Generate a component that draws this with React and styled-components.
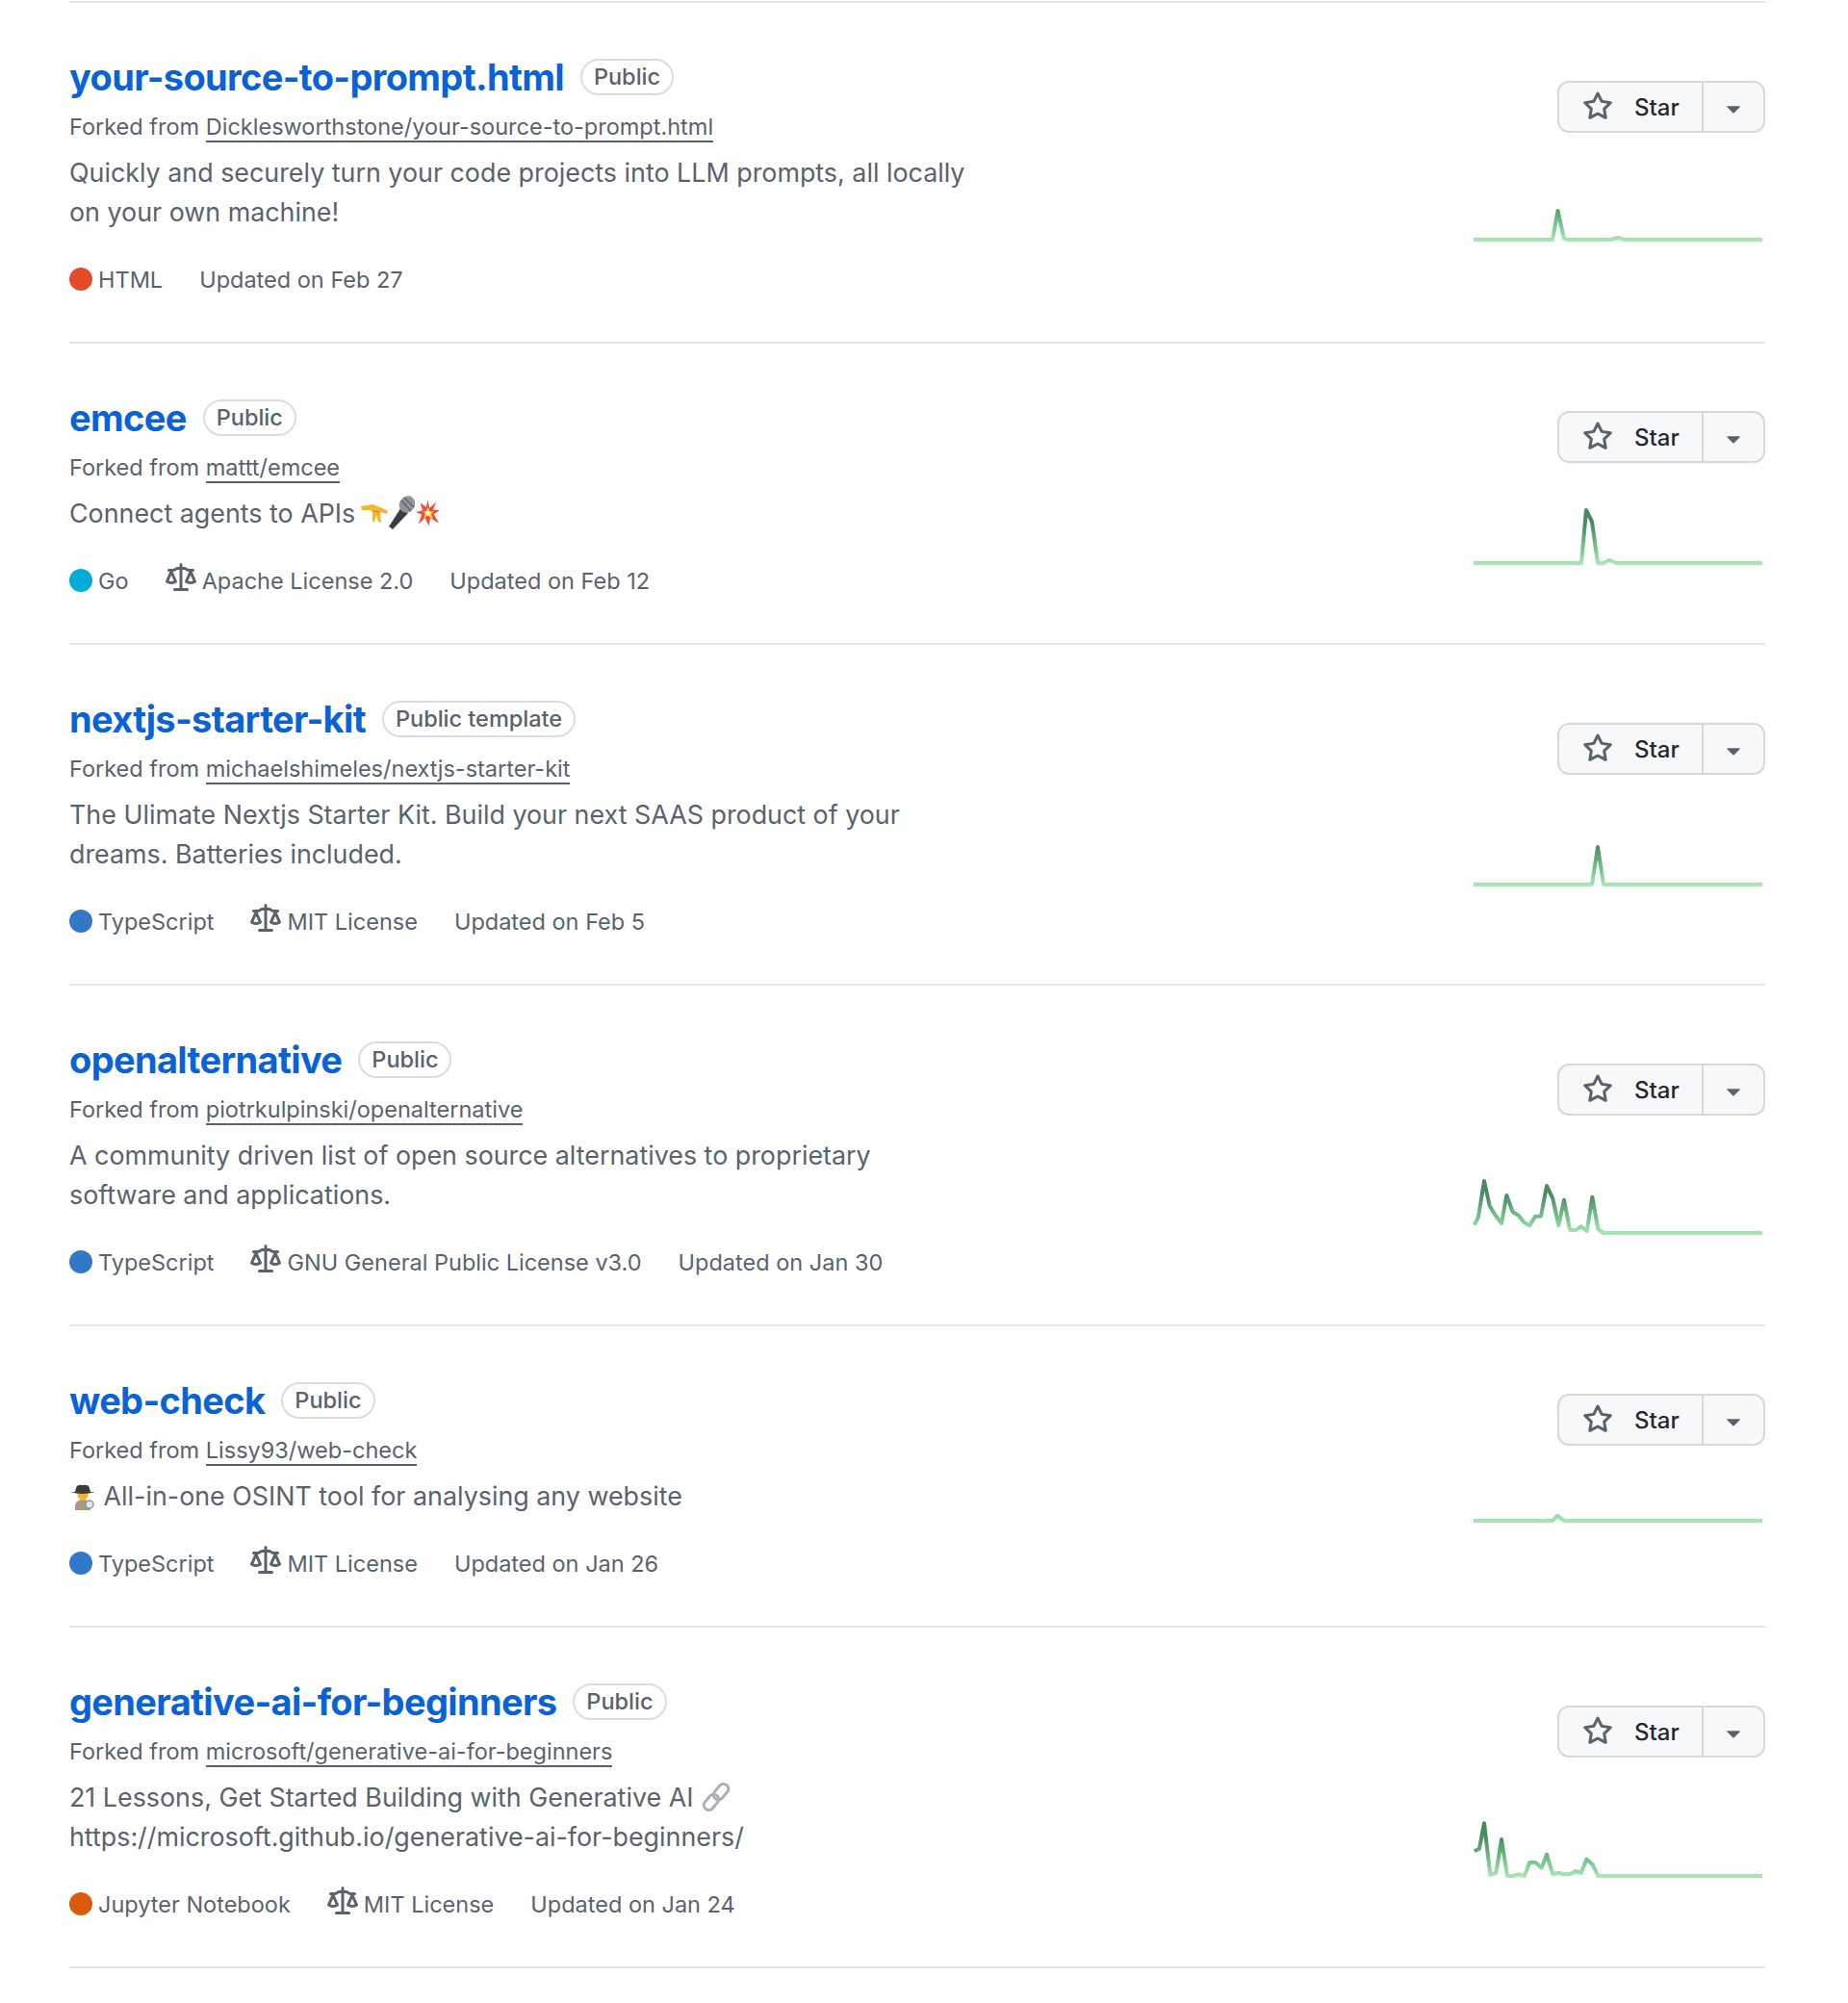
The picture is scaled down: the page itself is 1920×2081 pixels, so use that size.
import React from "react";
import styled, { createGlobalStyle } from "styled-components";
import { GoTriangleDown } from "react-icons/go";

const GlobalStyle = createGlobalStyle`
  html, body {
    margin: 0;
    padding: 0;
    background: #ffffff;
  }
  body {
    font-family: Inter, "Liberation Sans", sans-serif;
    color: #59636e;
  }
`;

const Page = styled.div`
  width: 1920px;
  height: 2081px;
  box-sizing: border-box;
  padding: 1px 86px 0 72px;
`;

const Row = styled.div`
  display: flex;
  justify-content: space-between;
  height: ${(p) => (p.$tall ? 354 : 313)}px;
  box-sizing: border-box;
  border-top: 2px solid #e3e6ea;
  &:last-child {
    height: 356px;
    border-bottom: 2px solid #e3e6ea;
  }
`;

const Info = styled.div`
  padding-top: 54px;
  width: 980px;
`;

const TitleLine = styled.div`
  display: flex;
  align-items: center;
  gap: 17px;
  height: 46px;
`;

const RepoName = styled.a`
  font-size: 38px;
  line-height: 46px;
  font-weight: 700;
  letter-spacing: -0.65px;
  color: #0a63d6;
`;

const Label = styled.span`
  font-size: 23.5px;
  font-weight: 500;
  line-height: 34px;
  padding: 0 12px;
  border: 2px solid #d9dde2;
  border-radius: 20px;
`;

const Fork = styled.p`
  margin: 13px 0 0;
  font-size: 23.5px;
  line-height: 32px;
`;

const ForkLink = styled.a`
  border-bottom: 2px solid #59636e;
`;

const Desc = styled.p`
  margin: 11px 0 0;
  font-size: 26.85px;
  line-height: 41px;
`;

const Meta = styled.div`
  display: flex;
  align-items: center;
  gap: 38px;
  margin-top: 33px;
  font-size: 23.5px;
  line-height: 34px;
`;

const MetaItem = styled.span`
  display: flex;
  align-items: center;
  gap: 6px;
`;

const Dot = styled.span`
  width: 24px;
  height: 24px;
  margin-top: -2px;
  border-radius: 50%;
  background: ${(p) => p.$color};
`;

const Octicon = styled.svg`
  width: ${(p) => p.$size}px;
  height: ${(p) => p.$size}px;
  fill: #59636e;
  flex: none;
`;

const LawIcon = styled(Octicon)`
  margin-top: -6px;
`;

const Side = styled.div`
  display: flex;
  flex-direction: column;
  align-items: flex-end;
  padding-top: ${(p) => (p.$tall ? 81 : 70)}px;
`;

const StarGroup = styled.div`
  display: flex;
  height: 54px;
  width: 216px;
  box-sizing: border-box;
  background: #f6f8fa;
  border: 2px solid #d5d9de;
  border-radius: 12px;
`;

const StarButton = styled.button`
  display: flex;
  align-items: center;
  gap: 22px;
  width: 150px;
  padding: 0 0 0 24px;
  background: none;
  border: 0;
  border-right: 2px solid #d5d9de;
  font: 500 24px Inter, "Liberation Sans", sans-serif;
  color: #25292e;
`;

const CaretButton = styled.button`
  flex: 1;
  display: flex;
  align-items: center;
  justify-content: center;
  padding: 6px 0 0;
  background: none;
  border: 0;
  color: #59636e;
`;

const Spark = styled.svg`
  display: block;
  width: 304px;
  height: 130px;
  margin: 4px 0 0 0;
  overflow: visible;
`;

const Emoji = styled.svg`
  display: inline-block;
  width: ${(p) => p.$w}px;
  height: ${(p) => p.$h}px;
  vertical-align: ${(p) => p.$drop || -5}px;
  margin-left: ${(p) => p.$ml || 0}px;
`;

const StarGlyph = () => (
  <Octicon viewBox="0 0 16 16" $size={32}>
    <path d="M8 .25a.75.75 0 0 1 .673.418l1.882 3.815 4.21.612a.75.75 0 0 1 .416 1.279l-3.046 2.97.719 4.192a.751.751 0 0 1-1.088.791L8 12.347l-3.766 1.98a.75.75 0 0 1-1.088-.79l.72-4.194L.818 6.374a.75.75 0 0 1 .416-1.28l4.21-.611L7.327.668A.75.75 0 0 1 8 .25Zm0 2.445L6.615 5.5a.75.75 0 0 1-.564.41l-3.097.45 2.24 2.184a.75.75 0 0 1 .216.664l-.528 3.084 2.769-1.456a.75.75 0 0 1 .698 0l2.77 1.456-.53-3.084a.75.75 0 0 1 .216-.664l2.24-2.183-3.096-.45a.75.75 0 0 1-.564-.41L8 2.694Z" />
  </Octicon>
);

const LawGlyph = () => (
  <LawIcon viewBox="0 0 16 16" $size={32}>
    <path d="M8.75.75V2h.985c.304 0 .603.08.867.231l1.29.736c.038.022.08.033.124.033h2.234a.75.75 0 0 1 0 1.5h-.427l2.111 4.692a.75.75 0 0 1-.154.838l-.53-.53.529.531-.001.002-.002.002-.006.006-.006.005-.01.01-.045.04c-.21.176-.441.327-.686.45C14.556 10.78 13.88 11 13 11a4.498 4.498 0 0 1-2.023-.454 3.544 3.544 0 0 1-.686-.45l-.045-.04-.016-.015-.006-.006-.004-.004v-.001a.75.75 0 0 1-.154-.838L12.178 4.5h-.162c-.305 0-.604-.079-.868-.231l-1.29-.736a.245.245 0 0 0-.124-.033H8.75V13h2.5a.75.75 0 0 1 0 1.5h-6.5a.75.75 0 0 1 0-1.5h2.5V3.5h-.984a.245.245 0 0 0-.124.033l-1.289.737c-.265.15-.564.23-.869.23h-.162l2.112 4.692a.75.75 0 0 1-.154.838l-.53-.53.529.531-.001.002-.002.002-.006.006-.016.015-.045.04c-.21.176-.441.327-.686.45C4.556 10.78 3.88 11 3 11a4.498 4.498 0 0 1-2.023-.454 3.544 3.544 0 0 1-.686-.45l-.045-.04-.016-.015-.006-.006-.004-.004v-.001a.75.75 0 0 1-.154-.838L2.178 4.5H1.75a.75.75 0 0 1 0-1.5h2.234a.249.249 0 0 0 .125-.033l1.288-.737c.265-.15.564-.23.869-.23h.984V.75a.75.75 0 0 1 1.5 0Zm2.945 8.477c.285.135.718.273 1.305.273s1.02-.138 1.305-.273L13 6.327Zm-10 0c.285.135.718.273 1.305.273s1.02-.138 1.305-.273L3 6.327Z" />
  </LawIcon>
);

// sparkline traced from the reference: [x, height above the baseline]
const Sparkline = ({ id, base, points }) => {
  const d = points
    .map(([x, h], i) => `${i ? "L" : "M"}${x} ${(base - h).toFixed(1)}`)
    .join(" ");
  return (
    <Spark viewBox="0 0 304 130">
      <defs>
        <linearGradient
          id={id}
          gradientUnits="userSpaceOnUse"
          x1="0"
          y1={base}
          x2="0"
          y2={base - 40}
        >
          <stop offset="0%" stopColor="#a5e6b3" />
          <stop offset="40%" stopColor="#74c48c" />
          <stop offset="100%" stopColor="#4c8a62" />
        </linearGradient>
      </defs>
      <path d={d} fill="none" stroke={`url(#${id})`} strokeWidth="4" strokeLinejoin="round" />
    </Spark>
  );
};

// turns points read off a 3x crop into sparkline points
const fromCrop = (list, baseY) =>
  list.map(([x, y]) => [+(x / 3 - 19).toFixed(1), (baseY - y) / 3]);

const PinchEmoji = () => (
  <Emoji viewBox="0 0 28 22" $w={28} $h={22} $ml={6} $drop={-2}>
    <path d="M0 3 L12 1 L20 4 L28 8 L27 11 L20 9 L21 20 L18 19 L16 12 L14 20 L12 18 L12 8 L7 7 L1 7 Z" fill="#f3b62f" />
    <path d="M12 8 L20 9" stroke="#c98a1a" strokeWidth="1" />
  </Emoji>
);

const MicEmoji = () => (
  <Emoji viewBox="0 0 28 35" $w={28} $h={35} $drop={-7}>
    <path d="M1 32 L14 12 L21 18 L5 35 Z" fill="#3a3e42" />
    <ellipse cx="20" cy="9" rx="8" ry="9" transform="rotate(35 20 9)" fill="#8e9499" />
    <path d="M14 5 L24 16 M17 2 L27 12" stroke="#5c6166" strokeWidth="1.2" />
  </Emoji>
);

const BoomEmoji = () => (
  <Emoji viewBox="0 0 28 32" $w={25} $h={32} $drop={-6} $ml={1}>
    <path d="M14 1 L16 10 L24 3 L20 12 L28 13 L21 17 L27 28 L17 22 L15 31 L11 22 L3 29 L7 18 L0 15 L8 13 L5 4 L12 9 Z" fill="#ee4d3c" />
    <path d="M14 9 L16 14 L21 14 L18 17 L20 23 L14 19 L9 23 L11 17 L8 14 L12 14 Z" fill="#fbd24b" />
    <circle cx="14" cy="16" r="2.6" fill="#fff6d8" />
  </Emoji>
);

const SleuthEmoji = () => (
  <Emoji viewBox="0 0 28 28" $w={28} $h={28}>
    <path d="M6 25 Q6 17 14 17 Q22 17 22 25 L22 28 L6 28 Z" fill="#a79a80" />
    <circle cx="14" cy="12" r="5.5" fill="#f7b32f" />
    <path d="M7 5 Q8 1 14 2 Q20 1 21 5 L22 9 L27 9 Q14 13 1 9 L6 9 Z" fill="#3c3c3a" />
    <circle cx="21" cy="22" r="4" fill="#dfeaf0" stroke="#8a979e" strokeWidth="1.5" />
  </Emoji>
);

const LinkEmoji = () => (
  <Emoji viewBox="0 0 28 28" $w={32} $h={32} $drop={-6}>
    <g fill="none" stroke="#a9b0b6" strokeWidth="2.6">
      <rect x="14" y="1" width="9" height="16" rx="4.5" transform="rotate(40 18 9)" />
      <rect x="5" y="11" width="9" height="16" rx="4.5" transform="rotate(40 10 19)" />
    </g>
  </Emoji>
);

const repos = [
  {
    name: "your-source-to-prompt.html",
    label: "Public",
    fork: "Dicklesworthstone/your-source-to-prompt.html",
    desc: (
      <>
        Quickly and securely turn your code projects into LLM prompts, all locally
        <br />
        on your own machine!
      </>
    ),
    tall: true,
    lang: "HTML",
    color: "#e34c26",
    updated: "Feb 27",
    base: 107,
    points: [[1, 0], [83, 0], [88.5, 30], [95, 1], [99, 0], [144, 0], [151, 2], [158, 0], [301, 0]],
  },
  {
    name: "emcee",
    label: "Public",
    fork: "mattt/emcee",
    desc: (
      <>
        Connect agents to APIs
        <PinchEmoji />
        <MicEmoji />
        <BoomEmoji />
      </>
    ),
    lang: "Go",
    color: "#00add8",
    license: "Apache License 2.0",
    updated: "Feb 12",
    base: 100,
    points: [[1, 0], [113, 0], [118, 55], [124, 43], [130, 0], [136, 0], [142, 3], [149, 0], [301, 0]],
  },
  {
    name: "nextjs-starter-kit",
    label: "Public template",
    fork: "michaelshimeles/nextjs-starter-kit",
    desc: (
      <>
        The Ulimate Nextjs Starter Kit. Build your next SAAS product of your
        <br />
        dreams. Batteries included.
      </>
    ),
    tall: true,
    lang: "TypeScript",
    color: "#3178c6",
    license: "MIT License",
    updated: "Feb 5",
    base: 110,
    points: [[1, 0], [124, 0], [130, 39], [136, 0], [301, 0]],
  },
  {
    name: "openalternative",
    label: "Public",
    fork: "piotrkulpinski/openalternative",
    desc: (
      <>
        A community driven list of open source alternatives to proprietary
        <br />
        software and applications.
      </>
    ),
    tall: true,
    lang: "TypeScript",
    color: "#3178c6",
    license: "GNU General Public License v3.0",
    updated: "Jan 30",
    base: 118,
    points: fromCrop(
      [[62, 220], [75, 195], [93, 83], [110, 160], [128, 190], [147, 215], [163, 128], [182, 180], [200, 190], [218, 213], [235, 222], [252, 193], [270, 193], [288, 98], [307, 138], [325, 222], [342, 142], [360, 235], [377, 237], [395, 225], [413, 240], [430, 133], [448, 233], [465, 245], [960, 245]],
      245
    ),
  },
  {
    name: "web-check",
    label: "Public",
    fork: "Lissy93/web-check",
    desc: (
      <>
        <SleuthEmoji /> All-in-one OSINT tool for analysing any website
      </>
    ),
    lang: "TypeScript",
    color: "#3178c6",
    license: "MIT License",
    updated: "Jan 26",
    base: 74,
    points: [[1, 0], [83, 0], [88, 5], [95, 0], [301, 0]],
  },
  {
    name: "generative-ai-for-beginners",
    label: "Public",
    fork: "microsoft/generative-ai-for-beginners",
    desc: (
      <>
        21 Lessons, Get Started Building with Generative AI <LinkEmoji />
        <br />
        https://microsoft.github.io/generative-ai-for-beginners/
      </>
    ),
    tall: true,
    lang: "Jupyter Notebook",
    color: "#da5b0b",
    license: "MIT License",
    updated: "Jan 24",
    base: 119,
    points: fromCrop(
      [[62, 160], [78, 152], [93, 73], [112, 233], [130, 228], [147, 123], [165, 237], [183, 237], [200, 232], [218, 237], [235, 195], [253, 195], [272, 212], [288, 170], [307, 232], [325, 228], [343, 232], [360, 232], [377, 222], [395, 228], [412, 185], [430, 200], [448, 237], [960, 237]],
      237
    ),
  },
];

const App = () => (
  <Page>
    <GlobalStyle />
    {repos.map((repo, i) => (
      <Row key={repo.name} $tall={repo.tall}>
        <Info>
          <TitleLine>
            <RepoName>{repo.name}</RepoName>
            <Label>{repo.label}</Label>
          </TitleLine>
          <Fork>
            Forked from <ForkLink>{repo.fork}</ForkLink>
          </Fork>
          <Desc>{repo.desc}</Desc>
          <Meta>
            <MetaItem>
              <Dot $color={repo.color} />
              {repo.lang}
            </MetaItem>
            {repo.license && (
              <MetaItem>
                <LawGlyph />
                {repo.license}
              </MetaItem>
            )}
            <MetaItem>Updated on {repo.updated}</MetaItem>
          </Meta>
        </Info>
        <Side $tall={repo.tall}>
          <StarGroup>
            <StarButton>
              <StarGlyph />
              Star
            </StarButton>
            <CaretButton>
              <GoTriangleDown size={26} />
            </CaretButton>
          </StarGroup>
          <Sparkline id={`spark-${i}`} base={repo.base} points={repo.points} />
        </Side>
      </Row>
    ))}
  </Page>
);

export default App;
